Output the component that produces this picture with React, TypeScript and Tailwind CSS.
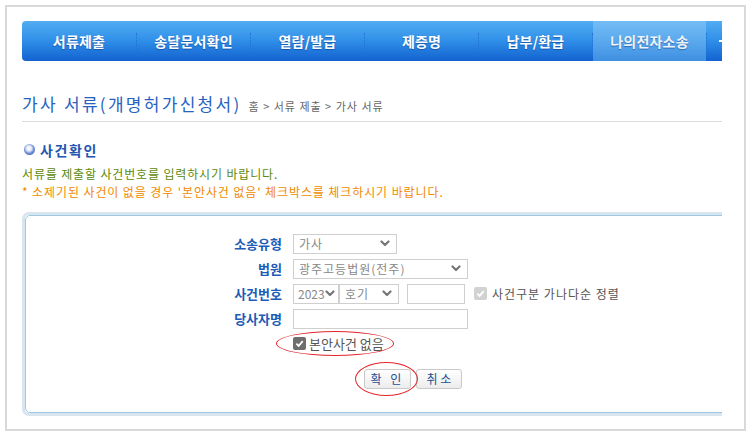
import React from "react";

const F = { fontFamily: '"Noto Sans CJK KR", "Noto Sans", sans-serif' };

function Chevron() {
  return (
    <svg width="10" height="7" viewBox="0 0 10 7" className="shrink-0">
      <path d="M1.5 1.5 L5 5 L8.5 1.5" fill="none" stroke="#777" strokeWidth="2.2" strokeLinecap="round" strokeLinejoin="round" />
    </svg>
  );
}

function Select({ w, text, px = "pl-[5px] pr-[6px]", track = "tracking-[1px]" }: { w: string; text: string; px?: string; track?: string }) {
  return (
    <div className={`${w} h-[20px] border border-[#cfcfcf] bg-white flex items-center justify-between ${px} text-[12px] text-[#888]`}>
      <span className={`leading-none ${track}`}>{text}</span>
      <Chevron />
    </div>
  );
}

function Label({ children }: { children: React.ReactNode }) {
  return (
    <div className="w-[80px] text-right text-[13px] font-bold text-[#1c5cb8] leading-[20px]">{children}</div>
  );
}

const navItems = ["서류제출", "송달문서확인", "열람/발급", "제증명", "납부/환급", "나의전자소송"];

export default function App() {
  return (
    <div style={F} className="w-[752px] h-[437px] bg-white p-[5px]">
      <div className="w-[741px] h-[426px] border-2 border-[#d9d9d9] pl-[15px] pt-[14px]">
        <div className="w-[700px] overflow-hidden">
          {/* Nav */}
          <div className="h-[40px] flex rounded-l-[4px] overflow-hidden bg-gradient-to-b from-[#52adf2] via-[#2f8ee8] to-[#1462cf]">
            {navItems.map((t, i) => (
              <div key={t} className="flex items-center shrink-0">
                {i > 0 && <div className="w-0 h-[16px] border-l border-dotted border-[#1f70cf]" />}
                <div
                  className={`h-[40px] flex items-center justify-center text-[14px] font-bold tracking-[0.2px] ${
                    i === 5
                      ? "w-[113px] bg-gradient-to-b from-[#74bcf4] via-[#5aa9ee] to-[#3f8fe2] text-[#eef3f8]"
                      : "w-[113px] text-white"
                  } ${i === 0 ? "w-[114px]" : ""}`}
                  style={{ textShadow: "0 1px 1px rgba(0,40,110,0.45)" }}
                >
                  {t}
                </div>
              </div>
            ))}
            <div className="flex items-center shrink-0">
              <div className="w-0 h-[16px] border-l border-dotted border-[#1f70cf]" />
              <div className="h-[40px] w-[114px] flex items-center pl-[12px]">
                <div className="w-[4px] h-[2px] bg-white" />
              </div>
            </div>
          </div>

          {/* Title */}
          <div className="mt-[33px] pb-[6px] border-b border-[#dcdcdc] flex items-baseline gap-[7px]">
            <div className="text-[17px] leading-[20px] tracking-[2.3px] text-[#2662c2]">가사 서류(개명허가신청서)</div>
            <div className="text-[11px] tracking-[1px] text-[#666]">홈 &gt; 서류 제출 &gt; 가사 서류</div>
          </div>

          {/* Heading */}
          <div className="mt-[19px] flex items-center gap-[5px] pl-[2px]">
            <div className="w-[11px] h-[11px] rounded-full bg-[radial-gradient(circle_at_45%_40%,#ffffff_0%,#e6ecf8_28%,#6f8ed6_55%,#2f55b0_100%)]" />
            <div className="text-[14px] font-bold leading-[18px] tracking-[1.6px] text-[#2356b0]">사건확인</div>
          </div>

          <div className="mt-[6px] text-[12px] leading-[18px] tracking-[0.85px] text-[#5c8a0a]">서류를 제출할 사건번호를 입력하시기 바랍니다.</div>
          <div className="text-[12px] leading-[18px] tracking-[0.9px] text-[#f08a00]">* 소제기된 사건이 없을 경우 '본안사건 없음' 체크박스를 체크하시기 바랍니다.</div>

          {/* Box */}
          <div className="mt-[11px] w-[730px] h-[204px] border-[3px] border-[#d8e5ef] rounded-[7px]">
            <div className="h-full border border-[#9fc7e2] rounded-[5px] pt-[18px] pl-[176px]">
              <div className="flex flex-col gap-[5px]">
                <div className="flex items-center gap-[11px]">
                  <Label>소송유형</Label>
                  <Select w="w-[104px]" text="가사" />
                </div>
                <div className="flex items-center gap-[11px]">
                  <Label>법원</Label>
                  <Select w="w-[175px]" text="광주고등법원(전주)" />
                </div>
                <div className="flex items-center gap-[11px]">
                  <Label>사건번호</Label>
                  <div className="flex items-center">
                    <Select w="w-[46px]" text="2023" px="pl-[4px] pr-[3px]" track="tracking-normal" />
                    <Select w="w-[60px]" text="호기" />
                    <div className="ml-[8px] w-[58px] h-[20px] border border-[#cfcfcf] bg-white" />
                    <div className="ml-[9px] w-[13px] h-[13px] rounded-[2px] bg-[#d2d2d2] flex items-center justify-center">
                      <svg width="9" height="9" viewBox="0 0 10 10">
                        <path d="M1.5 5.2 L4 7.6 L8.6 2.4" fill="none" stroke="#fff" strokeWidth="2" />
                      </svg>
                    </div>
                    <div className="ml-[5px] text-[12px] tracking-[1px] text-[#555] leading-none">사건구분 가나다순 정렬</div>
                  </div>
                </div>
                <div className="flex items-center gap-[11px]">
                  <Label>당사자명</Label>
                  <div className="w-[175px] h-[20px] border border-[#cfcfcf] bg-white" />
                </div>
              </div>

              <div className="mt-[7px] ml-[91px] flex items-center h-[16px]">
                <div className="relative flex items-center">
                  <div className="absolute left-[-17px] top-[-6px] w-[118px] h-[25px] rounded-[50%] border border-[#e3262b]" />
                  <div className="w-[13px] h-[13px] rounded-[2px] bg-[#6e6e6e] flex items-center justify-center">
                    <svg width="9" height="9" viewBox="0 0 10 10">
                      <path d="M1.5 5.2 L4 7.6 L8.6 2.4" fill="none" stroke="#fff" strokeWidth="2" />
                    </svg>
                  </div>
                  <div className="ml-[3px] text-[13px] text-[#555] leading-none">본안사건 없음</div>
                </div>
              </div>

              <div className="mt-[17px] ml-[162px] flex items-center gap-[5px]">
                <div className="relative">
                  <div className="absolute left-[-9px] top-[-7px] w-[63px] h-[34px] rounded-[50%] border border-[#e3262b]" />
                  <div className="w-[47px] h-[20px] rounded-[3px] border border-[#c9c9c9] bg-gradient-to-b from-white to-[#ececec] flex items-center justify-center text-[12px] tracking-[3px] text-[#1d4f96]">
                    확 인
                  </div>
                </div>
                <div className="w-[46px] h-[20px] rounded-[3px] border border-[#c9c9c9] bg-gradient-to-b from-white to-[#ececec] flex items-center justify-center text-[12px] text-[#1d4f96]">
                  취 소
                </div>
              </div>
            </div>
          </div>
        </div>
      </div>
    </div>
  );
}
